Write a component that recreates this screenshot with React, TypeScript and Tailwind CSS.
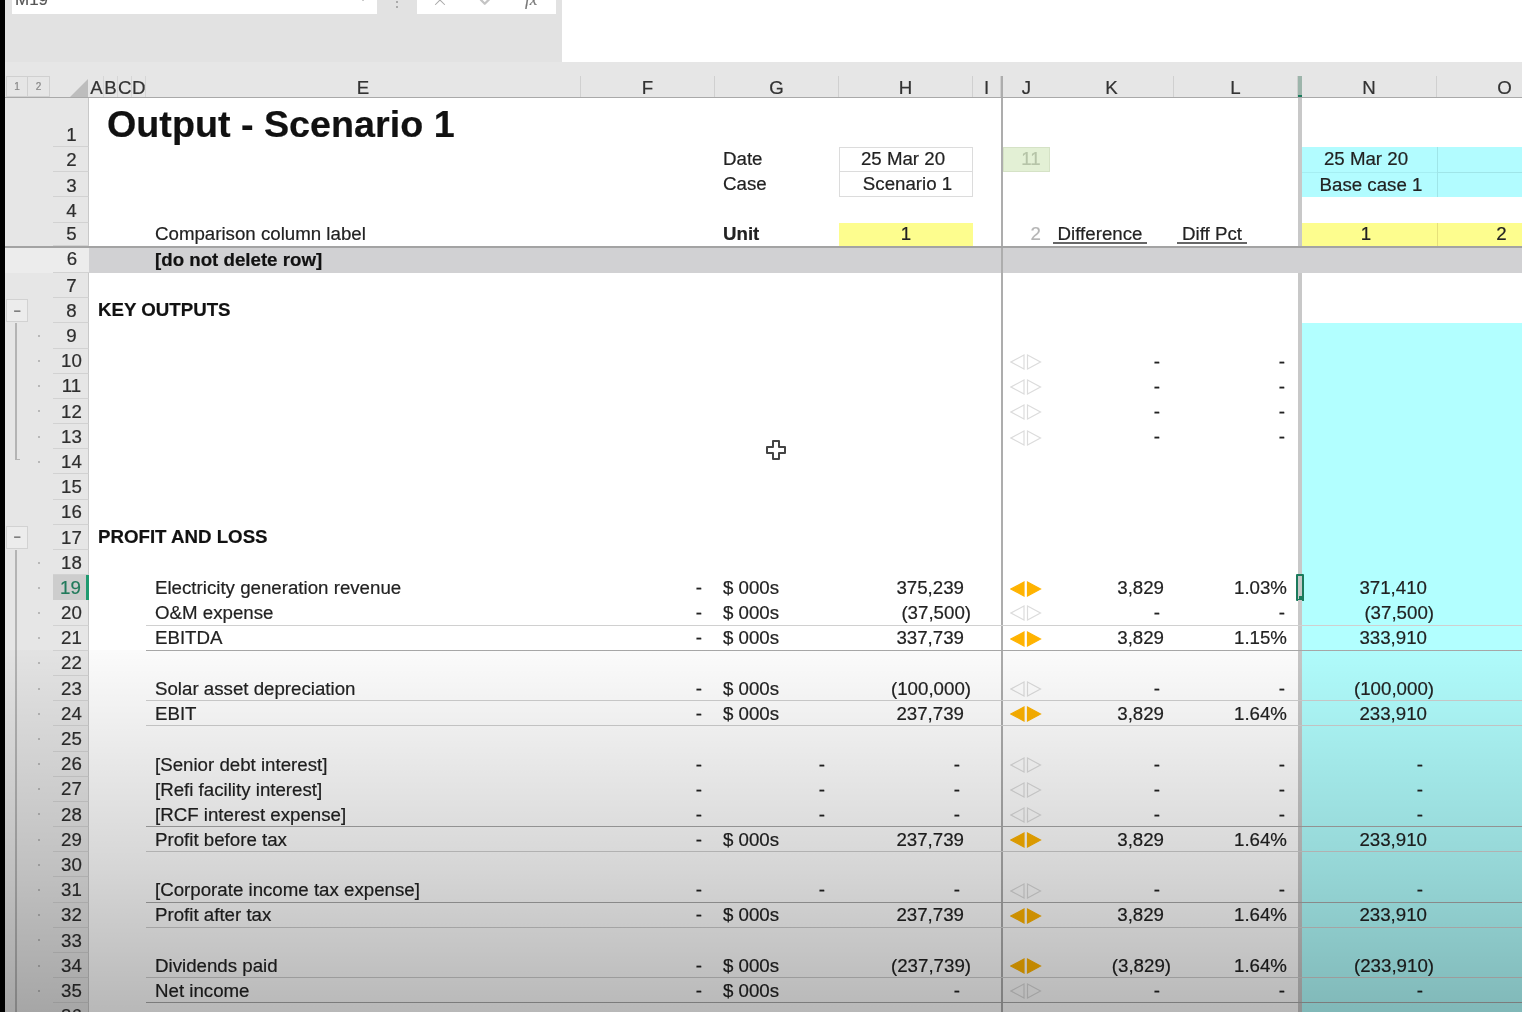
import React from "react";
import { X, Check, ChevronDown } from "lucide-react";

type Diamond = "on" | "off" | undefined;
type Line = "a" | "b" | undefined;
type RowData = {
  n: number;
  label?: string;
  f?: string;
  g?: string;
  h?: string;
  d?: Diamond;
  k?: string;
  l?: string;
  nv?: string;
  line?: Line;
};

function Diamonds({ state }: { state: Diamond }) {
  if (!state) return null;
  const on = state === "on";
  return (
    <svg width="32" height="16" viewBox="0 0 32 16" className="ml-[7px] shrink-0">
      <path
        d="M14 1 L1 8 L14 15 Z"
        fill={on ? "#ffb300" : "none"}
        stroke={on ? "#ffb300" : "#dcdcdc"}
        strokeWidth="1.2"
      />
      <path
        d="M17.5 1 L30.5 8 L17.5 15 Z"
        fill={on ? "#ffb300" : "none"}
        stroke={on ? "#ffb300" : "#dcdcdc"}
        strokeWidth="1.2"
      />
    </svg>
  );
}

function Num({ v, tight }: { v?: string; tight?: boolean }) {
  if (!v) return null;
  const pad = v.startsWith("(")
    ? tight
      ? "pr-[2px]"
      : "pr-[3px]"
    : v === "-"
      ? tight
        ? "pr-[13px]"
        : "pr-[14px]"
      : tight
        ? "pr-[9px]"
        : "pr-[10px]";
  return <div className={`w-full text-right ${pad}`}>{v}</div>;
}

function Gutter({ n }: { n: number }) {
  const hasLine = (n >= 9 && n <= 14) || n >= 18;
  const minus = n === 8 || n === 17;
  return (
    <div className="w-[48px] shrink-0 flex items-stretch bg-[#e6e6e6]">
      <div className="w-[33px] shrink-0 flex items-center">
        {minus ? (
          <div className="ml-[1px] w-[22px] h-[23px] bg-[#ececec] border border-[#d2d2d2] flex items-center justify-center text-[12px] leading-none font-bold text-[#777]">
            −
          </div>
        ) : hasLine ? (
          <div
            className={
              n === 14
                ? "ml-[10px] w-[5px] h-[11px] self-start border-l-2 border-b border-[#b4b4b4]"
                : "ml-[10px] w-[2px] self-stretch bg-[#b4b4b4]"
            }
          />
        ) : null}
      </div>
      <div className="flex items-center">
        {hasLine && <div className="w-[2px] h-[2px] bg-[#b8b8b8]" />}
      </div>
    </div>
  );
}

function RowHead({ n }: { n: number }) {
  const sel = n === 19;
  return (
    <div
      className={
        sel
          ? "w-[36px] shrink-0 flex items-center justify-center pt-[2px] pl-[2px] bg-[#cdcdcd] text-[#217a5b] border-r-[3px] border-[#1f9a70]"
          : "w-[36px] shrink-0 flex items-center justify-center pt-[2px] pl-[2px] bg-[#e6e6e6] text-[#2e2e2e] border-b border-[#d2d2d2] border-r border-r-[#c8c8c8]"
      }
    >
      {n}
    </div>
  );
}

const E = "w-[435px] shrink-0 flex items-center pl-[9px] whitespace-nowrap";
const F = "w-[134px] shrink-0 flex items-center";
const G = "w-[124px] shrink-0 flex items-center";
const H = "w-[134px] shrink-0 flex items-center";
const I = "w-[28px] shrink-0";
const J = "w-[49px] shrink-0 flex items-center border-l-2 border-[#adadad]";
const K = "w-[124px] shrink-0 flex items-center";
const L = "w-[124px] shrink-0 flex items-center";
const M = "w-[4px] shrink-0 bg-[#c8c8c8] relative";
const N = "w-[135px] shrink-0 flex items-center";

function DataRow({ r }: { r: RowData }) {
  const cyan = r.n >= 9;
  const line = r.line === "a" ? "border-b border-[#d0d0d0]" : r.line === "b" ? "border-b border-[#a9a9a9]" : "";
  return (
    <div className="flex h-[25.19px] shrink-0">
      <Gutter n={r.n} />
      <RowHead n={r.n} />
      <div className="w-[57px] shrink-0 flex items-center pl-[9px] whitespace-nowrap font-bold text-[#111]">
        {r.n === 8 ? "KEY OUTPUTS" : r.n === 17 ? "PROFIT AND LOSS" : ""}
      </div>
      <div className={`flex ${line}`}>
        <div className={`${E} pt-[2px]`}>{r.label}</div>
        <div className={`${F} pt-[2px]`}>{r.f && <Num v={r.f} tight />}</div>
        <div className={`${G} pt-[2px]`}>
          {r.g === "-" ? <Num v="-" /> : r.g ? <div className="pl-[8px]">{r.g}</div> : null}
        </div>
        <div className={`${H} pt-[2px]`}>
          <Num v={r.h} tight />
        </div>
        <div className={I} />
        <div className={`${J} pt-[2px]`}>
          <Diamonds state={r.d} />
        </div>
        <div className={`${K} pt-[2px]`}>
          <Num v={r.k} />
        </div>
        <div className={`${L} pt-[2px]`}>
          {r.l && (
            <div className={r.l === "-" ? "w-full text-right pr-[13px]" : "w-full text-right pr-[11px]"}>{r.l}</div>
          )}
        </div>
        <div className={M}>
          {r.n === 19 && (
            <div className="absolute -left-[2px] -top-[1px] w-[8px] h-[27px] border-2 border-[#1b7a5c] rounded-[1px]">
              <div className="absolute -right-[2px] -bottom-[2px] w-[5px] h-[5px] bg-[#1b7a5c]" />
            </div>
          )}
        </div>
        <div className={`${N} pt-[2px] ${cyan ? "bg-[#b2ffff]" : ""}`}>
          <Num v={r.nv} />
        </div>
        <div className={`${N} ${cyan ? "bg-[#b2ffff]" : ""}`} />
      </div>
    </div>
  );
}

const rows: RowData[] = [
  { n: 7 },
  { n: 8 },
  { n: 9 },
  { n: 10, d: "off", k: "-", l: "-" },
  { n: 11, d: "off", k: "-", l: "-" },
  { n: 12, d: "off", k: "-", l: "-" },
  { n: 13, d: "off", k: "-", l: "-" },
  { n: 14 },
  { n: 15 },
  { n: 16 },
  { n: 17 },
  { n: 18 },
  { n: 19, label: "Electricity generation revenue", f: "-", g: "$ 000s", h: "375,239", d: "on", k: "3,829", l: "1.03%", nv: "371,410" },
  { n: 20, label: "O&M expense", f: "-", g: "$ 000s", h: "(37,500)", d: "off", k: "-", l: "-", nv: "(37,500)", line: "a" },
  { n: 21, label: "EBITDA", f: "-", g: "$ 000s", h: "337,739", d: "on", k: "3,829", l: "1.15%", nv: "333,910", line: "b" },
  { n: 22 },
  { n: 23, label: "Solar asset depreciation", f: "-", g: "$ 000s", h: "(100,000)", d: "off", k: "-", l: "-", nv: "(100,000)", line: "a" },
  { n: 24, label: "EBIT", f: "-", g: "$ 000s", h: "237,739", d: "on", k: "3,829", l: "1.64%", nv: "233,910", line: "a" },
  { n: 25 },
  { n: 26, label: "[Senior debt interest]", f: "-", g: "-", h: "-", d: "off", k: "-", l: "-", nv: "-" },
  { n: 27, label: "[Refi facility interest]", f: "-", g: "-", h: "-", d: "off", k: "-", l: "-", nv: "-" },
  { n: 28, label: "[RCF interest expense]", f: "-", g: "-", h: "-", d: "off", k: "-", l: "-", nv: "-", line: "b" },
  { n: 29, label: "Profit before tax", f: "-", g: "$ 000s", h: "237,739", d: "on", k: "3,829", l: "1.64%", nv: "233,910", line: "a" },
  { n: 30 },
  { n: 31, label: "[Corporate income tax expense]", f: "-", g: "-", h: "-", d: "off", k: "-", l: "-", nv: "-", line: "b" },
  { n: 32, label: "Profit after tax", f: "-", g: "$ 000s", h: "237,739", d: "on", k: "3,829", l: "1.64%", nv: "233,910", line: "a" },
  { n: 33 },
  { n: 34, label: "Dividends paid", f: "-", g: "$ 000s", h: "(237,739)", d: "on", k: "(3,829)", l: "1.64%", nv: "(233,910)", line: "a" },
  { n: 35, label: "Net income", f: "-", g: "$ 000s", h: "-", d: "off", k: "-", l: "-", nv: "-", line: "b" },
  { n: 36 },
];

const cols: [string, string][] = [
  ["E", "w-[435px]"],
  ["F", "w-[134px]"],
  ["G", "w-[124px]"],
  ["H", "w-[134px]"],
  ["I", "w-[28px]"],
  ["J", "w-[49px]"],
  ["K", "w-[124px]"],
  ["L", "w-[124px]"],
];

function ColumnHeader() {
  return (
    <div className="flex h-[22px] shrink-0 bg-[#e6e6e6] border-b border-[#a9a9a9] text-[#333]">
      <div className="w-[48px] shrink-0 flex items-stretch text-[10px] text-[#888]">
        <div className="ml-[1px] w-[22px] border border-[#d0d0d0] flex items-center justify-center">1</div>
        <div className="w-[22px] border border-l-0 border-[#d0d0d0] flex items-center justify-center">2</div>
      </div>
      <div className="w-[36px] shrink-0 flex items-end justify-end">
        <svg width="19" height="18" viewBox="0 0 19 18">
          <path d="M18 0 L18 18 L0 18 Z" fill="#bdbdbd" />
        </svg>
      </div>
      <div className="flex w-[57px] shrink-0 pl-[1px]">
        {["A", "B", "C", "D"].map((c) => (
          <div key={c} className="w-[14px] text-center border-r border-[#d6d6d6] leading-[24px]">
            {c}
          </div>
        ))}
      </div>
      {cols.map(([c, w]) => (
        <div
          key={c}
          className={`${w} shrink-0 text-center leading-[24px] ${c === "J" ? "border-l-2 border-[#adadad]" : "border-r border-[#d0d0d0]"}`}
        >
          {c}
        </div>
      ))}
      <div className="w-[4px] shrink-0 bg-[#9db5ab] border-b-2 border-[#1b7a5c]" />
      <div className="w-[135px] shrink-0 text-center leading-[24px] border-r border-[#d0d0d0]">N</div>
      <div className="w-[135px] shrink-0 text-center leading-[24px]">O</div>
    </div>
  );
}

function TopRow({
  n,
  className = "h-[25.19px]",
  e,
  g,
  h,
  j,
  k,
  l,
  nCell,
  oCell,
  last,
}: {
  n: number;
  className?: string;
  e?: React.ReactNode;
  g?: React.ReactNode;
  h?: React.ReactNode;
  j?: React.ReactNode;
  k?: React.ReactNode;
  l?: React.ReactNode;
  nCell?: React.ReactNode;
  oCell?: React.ReactNode;
  last?: boolean;
}) {
  return (
    <div className={`flex shrink-0 ${className} ${last ? "border-b-2 border-[#a3a3a3]" : ""}`}>
      <div className="w-[48px] shrink-0 bg-[#e6e6e6]" />
      <div className="w-[36px] shrink-0 flex items-end pb-[1px] pl-[2px] justify-center bg-[#e6e6e6] text-[#2e2e2e] border-b border-[#d2d2d2] border-r border-r-[#c8c8c8]">
        {n}
      </div>
      <div className="w-[57px] shrink-0" />
      <div className={E}>{e}</div>
      <div className={F} />
      <div className={G}>{g}</div>
      <div className="w-[134px] shrink-0 flex">{h}</div>
      <div className={I} />
      <div className="w-[49px] shrink-0 flex border-l-2 border-[#adadad]">{j}</div>
      <div className={K}>{k}</div>
      <div className={L}>{l}</div>
      <div className={M} />
      <div className="w-[135px] shrink-0 flex">{nCell}</div>
      <div className="w-[135px] shrink-0 flex">{oCell}</div>
    </div>
  );
}

export default function App() {
  return (
    <div className="relative flex w-[1522px] h-[1012px] overflow-hidden bg-black font-['Liberation_Sans',Arial,sans-serif] text-[18.7px] leading-none text-[#222] [-webkit-text-stroke:0.2px]">
      <div className="w-[5px] shrink-0 bg-black" />
      <div className="w-[1517px] shrink-0 flex flex-col bg-white overflow-hidden blur-[0.4px]">
        {/* Ribbon / formula bar */}
        <div className="flex h-[62px] shrink-0 bg-[#e2e2e2]">
          <div className="ml-[7px] w-[365px] h-[14px] bg-white flex items-end justify-between overflow-hidden pl-[3px] pr-[8px] text-[#555] text-[17px]">
            <span className="mb-[6px]">M19</span>
            <ChevronDown size={12} className="mb-[9px] text-[#888]" />
          </div>
          <div className="w-[40px] h-[10px] flex flex-col items-center pt-[1px] gap-[3px]">
            <div className="w-[2px] h-[2px] bg-[#aaa]" />
            <div className="w-[2px] h-[2px] bg-[#aaa]" />
          </div>
          <div className="w-[139px] h-[14px] bg-white flex items-end overflow-hidden text-[#a8a8a8]">
            <X size={18} strokeWidth={1.4} className="ml-[14px] mb-[5px]" />
            <Check size={18} strokeWidth={3} className="ml-[29px] mb-[5px] text-[#c4c4c4]" />
            <span className="ml-[29px] mb-[6px] italic text-[17px] text-[#777] font-['Liberation_Serif',serif]">fx</span>
          </div>
          <div className="ml-[6px] flex-1 bg-white" />
        </div>
        <div className="h-[14px] shrink-0 bg-[#e6e6e6]" />
        <ColumnHeader />

        {/* Top rows */}
        <TopRow
          n={1}
          className="h-[49px]"
          e={
            <span className="-ml-[48px] self-start pt-[7px] text-[37.7px] leading-[38px] font-bold text-[#111]">
              Output - Scenario 1
            </span>
          }
        />
        <TopRow
          n={2}
          g={<div className="pl-[8px]">Date</div>}
          h={<div className="w-full flex items-center justify-center pr-[6px] border border-[#dcdcdc]">25 Mar 20</div>}
          j={<div className="w-full flex items-center justify-center pl-[9px] bg-[#e3f0d5] border border-[#d5e2c6] text-[#b6c4a8]">11</div>}
          nCell={<div className="w-full flex items-center justify-center pr-[7px] bg-[#b2fcff]">25 Mar 20</div>}
          oCell={<div className="w-full bg-[#b2fcff] border-l border-[#9fe5e8]" />}
        />
        <TopRow
          n={3}
          g={<div className="pl-[8px]">Case</div>}
          h={<div className="w-full flex items-center justify-center pl-[3px] border border-t-0 border-[#dcdcdc]">Scenario 1</div>}
          nCell={<div className="w-full flex items-center justify-center pl-[3px] bg-[#b2fcff] border-t border-[#a5eef2]">Base case 1</div>}
          oCell={<div className="w-full bg-[#b2fcff] border-l border-t border-[#9fe5e8]" />}
        />
        <TopRow n={4} />
        <TopRow
          n={5}
          last
          e={<span>Comparison column label</span>}
          g={<div className="pl-[8px] font-bold">Unit</div>}
          h={<div className="w-full flex items-center justify-center bg-[#fdfd8e]">1</div>}
          j={<div className="w-full flex items-center justify-end pr-[9px] text-[#b5b5b5]">2</div>}
          k={<div className="ml-[3px] w-[94px] text-center leading-[17px] border-b-2 border-[#666]">Difference</div>}
          l={<div className="ml-[3px] w-[70px] text-center leading-[17px] border-b-2 border-[#666]">Diff Pct</div>}
          nCell={<div className="w-full flex items-center justify-center pr-[7px] bg-[#fdfd8e]">1</div>}
          oCell={<div className="w-full flex items-center justify-center pr-[7px] bg-[#fdfd8e] border-l border-[#e6e07a]">2</div>}
        />
        {/* Row 6 */}
        <div className="flex h-[25.19px] shrink-0">
          <div className="w-[48px] shrink-0 bg-[#ececec]" />
          <div className="w-[36px] shrink-0 flex items-center justify-center pl-[2px] bg-[#ececec] text-[#2e2e2e] border-b border-[#d2d2d2]">6</div>
          <div className="flex-1 flex bg-[#d1d1d3]">
            <div className="w-[57px] shrink-0" />
            <div className={`${E} font-bold text-[#111]`}>[do not delete row]</div>
            <div className="w-[420px] shrink-0" />
            <div className="w-[2px] shrink-0 bg-[#adadad]" />
          </div>
        </div>
        {rows.map((r) => (
          <DataRow key={r.n} r={r} />
        ))}
      </div>

      {/* Video vignette over the lower part of the sheet */}
      <div className="absolute left-[5px] right-0 top-[650px] bottom-0 pointer-events-none bg-[linear-gradient(to_bottom,rgba(0,0,0,0.015)_0%,rgba(0,0,0,0.16)_60%,rgba(0,0,0,0.28)_100%)]" />

      {/* Excel cell cursor */}
      <svg width="22" height="22" viewBox="0 0 22 22" className="absolute left-[765px] top-[439px] blur-[0.4px]">
        <path
          d="M8 2 H14 V8 H20 V14 H14 V20 H8 V14 H2 V8 H8 Z"
          fill="#fff"
          stroke="#444"
          strokeWidth="2"
          strokeLinejoin="round"
        />
      </svg>
    </div>
  );
}
